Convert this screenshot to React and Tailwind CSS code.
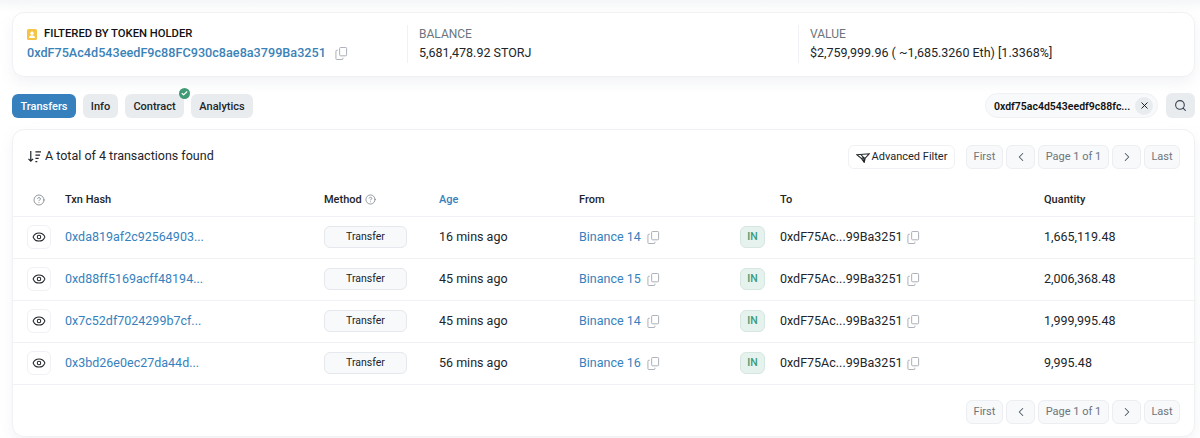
import { Check, ChevronLeft, ChevronRight, CircleHelp, Eye, Search, X } from "lucide-react";

const rows = [
  { hash: "0xda819af2c92564903...", age: "16 mins ago", from: "Binance 14", qty: "1,665,119.48" },
  { hash: "0xd88ff5169acff48194...", age: "45 mins ago", from: "Binance 15", qty: "2,006,368.48" },
  { hash: "0x7c52df7024299b7cf...", age: "45 mins ago", from: "Binance 14", qty: "1,999,995.48" },
  { hash: "0x3bd26e0ec27da44d...", age: "56 mins ago", from: "Binance 16", qty: "9,995.48" },
];

function CopyIcon() {
  return (
    <svg viewBox="0 0 14 14" fill="none" stroke="#a3a9b1" strokeWidth="1" className="w-[13px] h-[13px] shrink-0">
      <path d="M5 1.5a1 1 0 0 1 1-1h5.5a1 1 0 0 1 1 1v7a1 1 0 0 1-1 1H6a1 1 0 0 1-1-1z" />
      <path d="M3 3.5H2a1 1 0 0 0-1 1v8a1 1 0 0 0 1 1h5.5a1 1 0 0 0 1-1v-1" />
    </svg>
  );
}

function Pager() {
  const cls = "h-[24px] flex items-center justify-center rounded-md border border-[#eceef1] bg-[#f8f9fa] text-[11px] text-[#6c757d]";
  return (
    <div className="flex items-center gap-[3px]">
      <div className={cls + " w-[37px] pt-[2px]"}>First</div>
      <div className={cls + " w-[29px]"}>
        <ChevronLeft size={14} strokeWidth={1.75} color="#4b5563" />
      </div>
      <div className={cls + " w-[71px] pt-[2px]"}>Page 1 of 1</div>
      <div className={cls + " w-[29px]"}>
        <ChevronRight size={14} strokeWidth={1.75} color="#4b5563" />
      </div>
      <div className={cls + " w-[36px] pt-[2px]"}>Last</div>
    </div>
  );
}

export default function App() {
  return (
    <div className="w-[1200px] h-[438px] overflow-hidden bg-linear-to-b from-[#f5f6f8] to-white to-[12px] font-['Roboto',sans-serif] text-[#212529] pl-3 pr-[5px] pt-3">
      {/* holder summary */}
      <div className="h-[65px] pb-px flex items-center rounded-xl border border-[#eff1f4] bg-white shadow-[0_6px_14px_rgba(189,197,209,0.2)] px-[14px]">
        <div className="w-[380px]">
          <div className="flex items-center gap-[7px] text-[11.25px] leading-[18px] font-medium text-[#111] uppercase">
            <svg viewBox="0 0 10 11" className="w-[10px] h-[11px] shrink-0">
              <rect width="10" height="11" rx="1.5" fill="#f6c445" />
              <circle cx="5" cy="4.2" r="1.7" fill="#fff" />
              <path d="M2 9c0-1.8 1.3-2.7 3-2.7S8 7.200 8 9z" fill="#fff" />
            </svg>
            Filtered by token holder
          </div>
          <div className="flex items-center gap-[9px]">
            <a className="text-[12.65px] leading-[20px] font-medium text-[#3b82b8]">0xdF75Ac4d543eedF9c88FC930c8ae8a3799Ba3251</a>
            <CopyIcon />
          </div>
        </div>
        <div className="w-[391px] border-l border-[#eff1f4] pl-[11px]">
          <div className="text-[12px] leading-[18px] text-[#6c757d] uppercase">Balance</div>
          <div className="text-[12.5px] leading-[20px]">5,681,478.92 STORJ</div>
        </div>
        <div className="flex-1 border-l border-[#eff1f4] pl-[11px]">
          <div className="text-[12px] leading-[18px] text-[#6c757d] uppercase">Value</div>
          <div className="text-[12.5px] leading-[20px]">$2,759,999.96 ( ~1,685.3260 Eth) [1.3368%]</div>
        </div>
      </div>

      {/* tabs */}
      <div className="flex items-center justify-between mt-[16px] h-[25px]">
        <div className="flex items-center gap-[7px] text-[11px] font-medium">
          <div className="h-6 w-[64px] pt-[3px] flex items-center justify-center rounded-md bg-[#3681bd] text-white">Transfers</div>
          <div className="h-6 w-[35px] pt-[3px] flex items-center justify-center rounded-md bg-[#e9ecef]">Info</div>
          <div className="relative h-6 w-[59px] pt-[3px] flex items-center justify-center rounded-md bg-[#e9ecef]">
            Contract
            <span className="absolute -top-[6px] right-[-6px] w-[11px] h-[11px] rounded-full bg-[#3f9a75] flex items-center justify-center">
              <Check size={7} strokeWidth={4} color="white" />
            </span>
          </div>
          <div className="h-6 w-[62px] pt-[3px] flex items-center justify-center rounded-md bg-[#e9ecef]">Analytics</div>
        </div>
        <div className="flex items-center gap-2">
          <div className="h-[25px] w-[173px] pl-2 pr-[4px] flex items-center justify-between rounded-full bg-[#f8f9fa] border border-[#eff1f4] text-[10.5px] font-semibold text-[#111]">
            <span className="pt-[2px]">0xdf75ac4d543eedf9c88fc...</span>
            <span className="w-[18px] h-[18px] rounded-full bg-[#e9ecef] flex items-center justify-center">
              <X size={11} strokeWidth={2} />
            </span>
          </div>
          <div className="w-[29px] h-[25px] rounded-md bg-[#e9ecef] flex items-center justify-center">
            <Search size={13} strokeWidth={2} color="#374151" />
          </div>
        </div>
      </div>

      {/* table card */}
      <div className="mt-[11px] h-[308px] rounded-xl border border-[#eff1f4] bg-white shadow-[0_6px_14px_rgba(189,197,209,0.2)]">
        <div className="h-[51px] pt-[2px] px-[14px] flex items-center justify-between">
          <div className="flex items-center gap-[3px] text-[12.5px]">
            <svg viewBox="0 0 16 14" fill="none" stroke="#212529" strokeWidth="1.3" className="w-[15px] h-[13px]">
              <path d="M4 1v11M1.500 9.500 4 12l2.500-2.500M9 2h6M9 5.500h5M9 9h3.500M9 12.500h2" />
            </svg>
            A total of 4 transactions found
          </div>
          <div className="flex items-center gap-[11px]">
            <div className="h-[24px] w-[107px] pt-[2px] flex items-center justify-center gap-[2px] rounded-md border border-[#eff1f4] bg-white text-[11px]">
              <svg viewBox="0 0 14 10" fill="none" stroke="#212529" strokeWidth="1.1" className="w-[14px] h-[10px]">
                <path d="M.8 1.800 13.200.8 9.200 5.200 8.200 9.400 5.600 5.600zM4.800 1.500 7.600 4.600 8.200 9.400M5.600 5.600 7.600 4.600 9.200 5.200" />
              </svg>
              Advanced Filter
            </div>
            <Pager />
          </div>
        </div>

        <table className="w-full table-fixed border-collapse text-[12.5px]">
          <thead>
            <tr className="h-[35px] border-b border-[#eff1f4] text-[11px] text-left font-medium">
              <th className="w-[52px] pl-[20px] pt-[3px] font-medium">
                <CircleHelp size={12} color="#6c757d" strokeWidth={1.5} />
              </th>
              <th className="w-[259px] pt-[3px] font-medium">Txn Hash</th>
              <th className="w-[115px] pt-[3px] font-medium">
                <span className="flex items-center gap-[3px]">
                  Method <CircleHelp size={11} color="#6c757d" strokeWidth={1.5} />
                </span>
              </th>
              <th className="w-[140px] pt-[3px] font-medium text-[#3681bd]">Age</th>
              <th className="w-[161px] pt-[3px] font-medium">From</th>
              <th className="w-[40px]" />
              <th className="w-[264px] pt-[3px] font-medium">To</th>
              <th className="pt-[3px] font-medium">Quantity</th>
            </tr>
          </thead>
          <tbody>
            {rows.map((row) => (
              <tr key={row.hash} className="h-[42px] border-b border-[#eff1f4]">
                <td className="pl-[14px]">
                  <div className="w-[24px] h-[24px] rounded-md border border-[#eff1f4] flex items-center justify-center">
                    <Eye size={14} strokeWidth={1.75} color="#212529" />
                  </div>
                </td>
                <td className="text-[#3681bd]">{row.hash}</td>
                <td>
                  <div className="w-[83px] h-[22px] rounded-md border border-[#e5e8ec] bg-[#f8f9fa] text-[10.5px] flex items-center justify-center">
                    Transfer
                  </div>
                </td>
                <td>{row.age}</td>
                <td>
                  <span className="flex items-center gap-[6px]">
                    <a className="text-[#3681bd]">{row.from}</a>
                    <CopyIcon />
                  </span>
                </td>
                <td>
                  <div className="w-[25px] h-[22px] rounded-md bg-[#e6f2ee] border border-[#d5e7e0] text-[10.5px] font-medium text-[#3f9a75] flex items-center justify-center">
                    IN
                  </div>
                </td>
                <td>
                  <span className="flex items-center gap-[5px]">
                    0xdF75Ac...99Ba3251
                    <CopyIcon />
                  </span>
                </td>
                <td>{row.qty}</td>
              </tr>
            ))}
          </tbody>
        </table>

        <div className="h-[52px] pt-[2px] px-[14px] flex items-center justify-end">
          <Pager />
        </div>
      </div>
    </div>
  );
}
